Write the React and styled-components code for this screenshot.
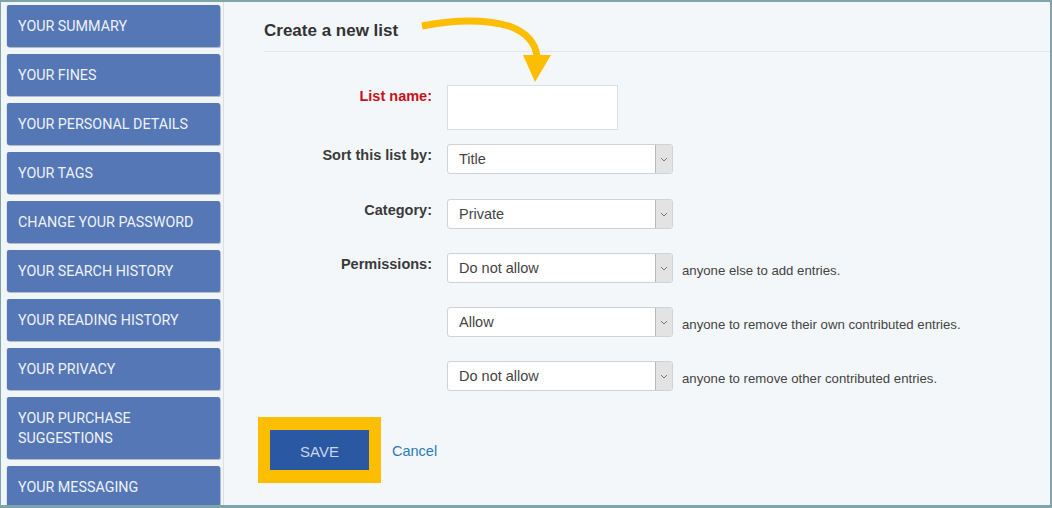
import React from 'react';
import styled, {createGlobalStyle} from "styled-components";

const GlobalStyle = createGlobalStyle`
  html, body {
    margin: 0;
    padding: 0;
    background: #ffffff;
  }
  * {
    box-sizing: border-box;
  }
`;

const Frame = styled.div`
  width: 1052px;
  height: 508px;
  display: flex;
  overflow: hidden;
  border-style: solid;
  border-color: #7fa5aa;
  border-width: 2px 2px 3px 1px;
  background: #f3f7fa;
`;

const Sidebar = styled.nav`
  width: 223px;
  flex-shrink: 0;
  padding: 3px 0 0 6px;
  border-right: 1px solid #dbe0e5;
  background: #f2f5f8;
  display: flex;
  flex-direction: column;
  gap: 7px;
`;

const NavButton = styled.a`
  width: 213px;
  height: ${({tall}) => tall ? "62px" : "42px"};
  flex-shrink: 0;
  display: flex;
  align-items: center;
  padding: 0 11px;
  background: #5577b5;
  border-radius: 2px;
  box-shadow: 1px 1px 0 #b4bcc8, -1px 0 0 #dfe4ea;
  color: #eef2fa;
  font-family: Roboto, "Liberation Sans", sans-serif;
  font-size: 14.3px;
  line-height: 20px;
  text-transform: uppercase;
  text-decoration: none;
`;

const Main = styled.main`
  position: relative;
  flex: 1;
  padding: 0 0 0 40px;
  font-family: "Liberation Sans", Arial, sans-serif;
  color: #333333;
`;

const Heading = styled.h2`
  margin: 0;
  height: 50px;
  padding-top: 19px;
  font-size: 17px;
  font-weight: bold;
  color: #333333;
  border-bottom: 1px solid #e3e7eb;
`;

const Form = styled.form`
  padding-top: 33px;
`;

const Row = styled.div`
  display: grid;
  grid-template-columns: 168px auto;
  column-gap: 15px;
  align-items: start;
  margin-bottom: ${({gap}) => gap || "24px"};
`;

const Label = styled.label`
  text-align: right;
  font-size: 14.5px;
  font-weight: bold;
  line-height: 17px;
  padding-top: ${({top}) => top || "3px"};
  color: ${({required}) => required ? "#c8101a" : "#3a3a3a"};
`;

const Control = styled.div`
  display: flex;
  align-items: center;
`;

const TextInput = styled.input`
  width: 171px;
  height: 45px;
  border: 1px solid #dcdfe2;
  background: #ffffff;
  outline: none;
`;

const Select = styled.div`
  width: 226px;
  height: 30px;
  display: flex;
  align-items: center;
  border: 1px solid #cfd2d6;
  border-radius: 3px;
  background: #ffffff;
  overflow: hidden;
`;

const SelectValue = styled.span`
  flex: 1;
  padding-left: 11px;
  font-size: 14.5px;
  color: #444444;
`;

const SelectArrow = styled.span`
  width: 17px;
  height: 100%;
  display: flex;
  align-items: center;
  justify-content: center;
  background: #e3e3e3;
  border-left: 1px solid #b9b9b9;
`;

const Hint = styled.span`
  margin-left: 9px;
  padding-top: 4px;
  font-size: 13.2px;
  color: #444444;
`;

const Actions = styled.div`
  display: flex;
  align-items: center;
  gap: 11px;
  margin: 26px 0 0 -6px;
`;

const Highlight = styled.div`
  border: solid #fdbe00;
  border-width: 13px 12px 13px 12px;
`;

const SaveButton = styled.button`
  width: 99px;
  height: 40px;
  padding-top: 3px;
  border: none;
  background: #2b58a3;
  color: #c9d6ef;
  font-family: "Liberation Sans", Arial, sans-serif;
  font-size: 15px;
  text-transform: uppercase;
  display: block;
`;

const CancelLink = styled.a`
  padding-top: 2px;
  font-size: 14.5px;
  color: #2a7abb;
  text-decoration: none;
`;

const Pointer = styled.svg`
  position: absolute;
  left: 0;
  top: 0;
  pointer-events: none;
`;

const navItems = [
    "Your summary",
    "Your fines",
    "Your personal details",
    "Your tags",
    "Change your password",
    "Your search history",
    "Your reading history",
    "Your privacy",
    "Your purchase suggestions",
    "Your messaging",
];

const Chevron = () => (
    <svg width="8" height="5" viewBox="0 0 8 5">
        <path d="M1 1 L4 4 L7 1" fill="none" stroke="#777" strokeWidth="1"/>
    </svg>
);

const FakeSelect = ({value}) => (
    <Select>
        <SelectValue>{value}</SelectValue>
        <SelectArrow><Chevron/></SelectArrow>
    </Select>
);

const App = () => {
    return (
        <>
            <GlobalStyle/>
            <Frame>
                <Sidebar>
                    {navItems.map(item => (
                        <NavButton key={item} href="#" tall={item === "Your purchase suggestions"}>
                            {item === "Your purchase suggestions"
                                ? <span>Your purchase<br/>suggestions</span>
                                : item}
                        </NavButton>
                    ))}
                </Sidebar>
                <Main>
                    <Heading>Create a new list</Heading>
                    <Form>
                        <Row gap="14px">
                            <Label required top="3px">List name:</Label>
                            <Control><TextInput/></Control>
                        </Row>
                        <Row gap="25px">
                            <Label>Sort this list by:</Label>
                            <Control><FakeSelect value="Title"/></Control>
                        </Row>
                        <Row>
                            <Label>Category:</Label>
                            <Control><FakeSelect value="Private"/></Control>
                        </Row>
                        <Row>
                            <Label>Permissions:</Label>
                            <Control>
                                <FakeSelect value="Do not allow"/>
                                <Hint>anyone else to add entries.</Hint>
                            </Control>
                        </Row>
                        <Row>
                            <span/>
                            <Control>
                                <FakeSelect value="Allow"/>
                                <Hint>anyone to remove their own contributed entries.</Hint>
                            </Control>
                        </Row>
                        <Row gap="0">
                            <span/>
                            <Control>
                                <FakeSelect value="Do not allow"/>
                                <Hint>anyone to remove other contributed entries.</Hint>
                            </Control>
                        </Row>
                        <Actions>
                            <Highlight>
                                <SaveButton type="button">Save</SaveButton>
                            </Highlight>
                            <CancelLink href="#">Cancel</CancelLink>
                        </Actions>
                    </Form>
                    <Pointer width="400" height="100" viewBox="0 0 400 100">
                        <path d="M198 24 Q 250 14 285 24 Q 310 33 313 54"
                              fill="none" stroke="#fdbd00" strokeWidth="7"/>
                        <polygon points="299,53 327,53 311,80" fill="#fdbd00"/>
                    </Pointer>
                </Main>
            </Frame>
        </>
    );
};

export default App;
